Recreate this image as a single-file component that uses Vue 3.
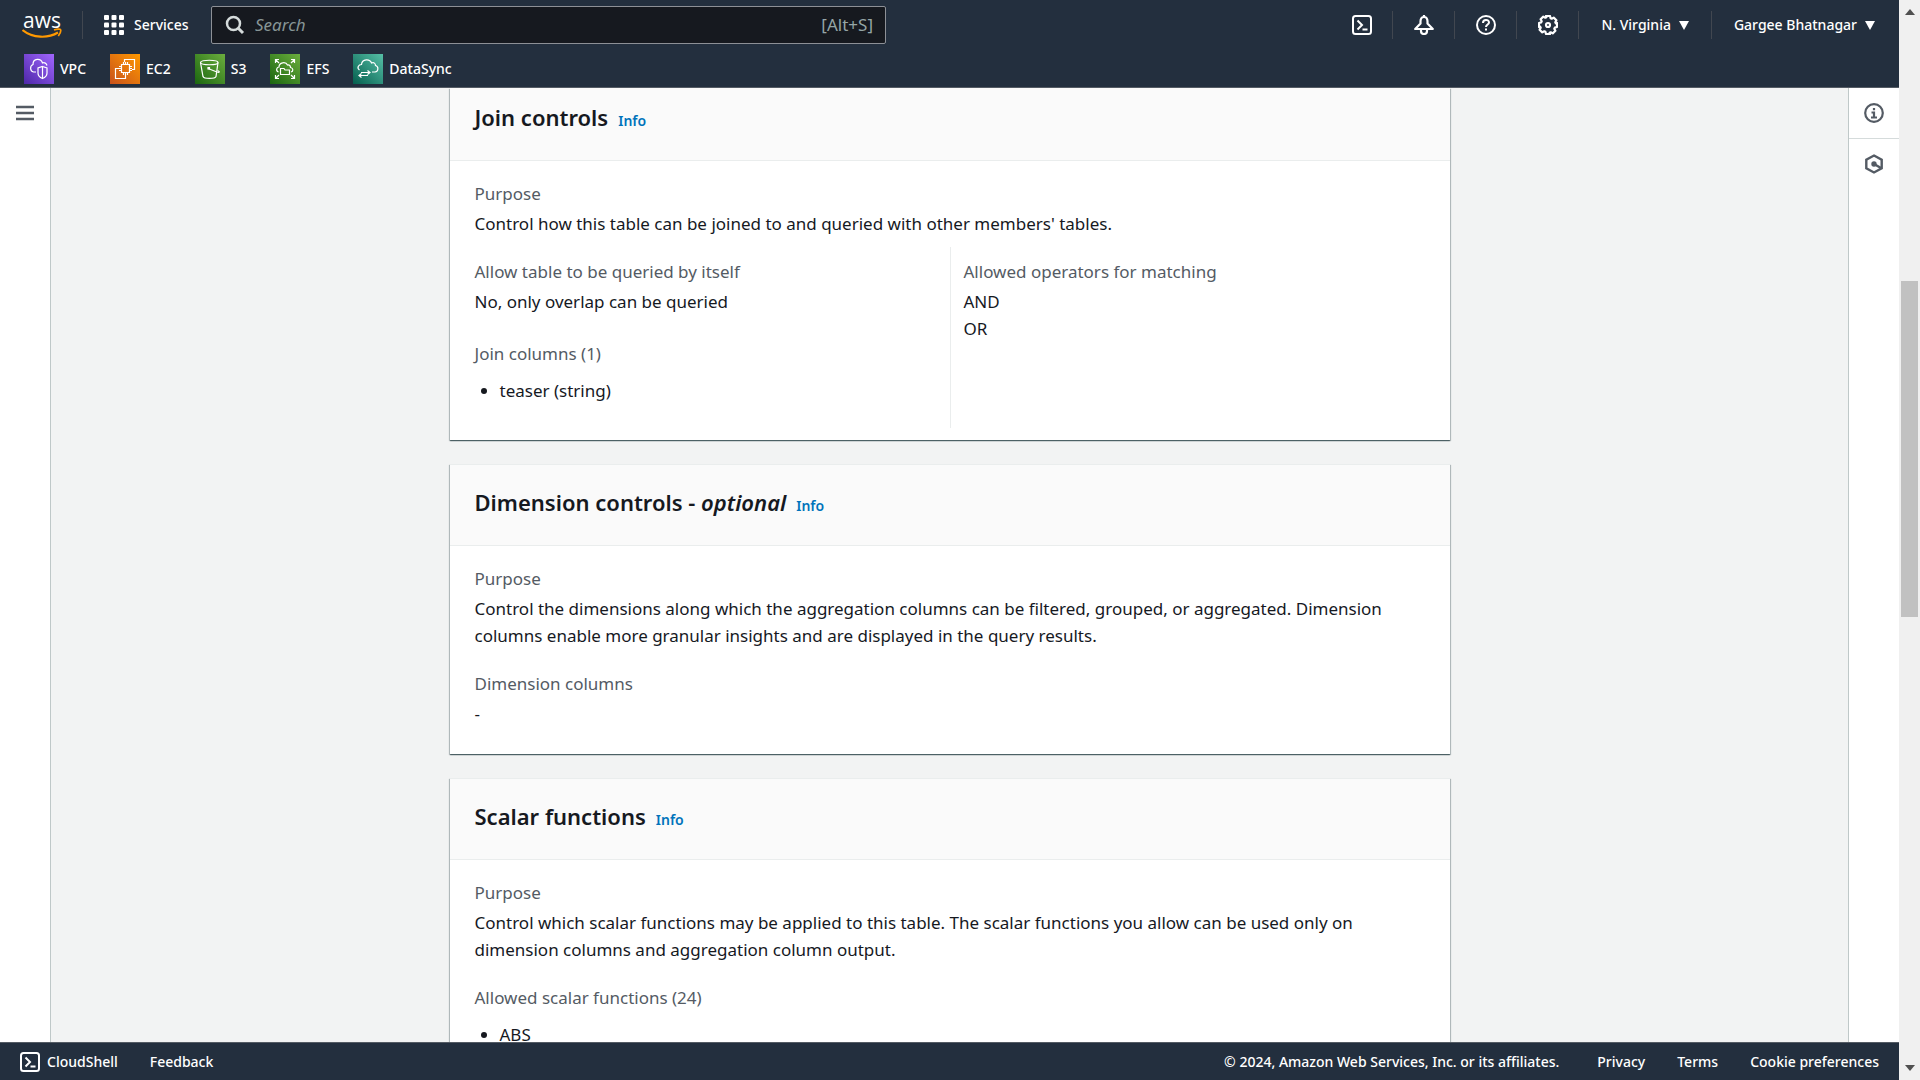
<template>
  <div class="app">
    <div class="page">
      <!-- Top navigation -->
      <header class="header">
        <div class="nav-row">
          <a class="logo" href="#" aria-label="AWS home">
            <span class="logo-text">aws</span>
            <svg class="logo-smile" viewBox="0 0 40 11" width="40" height="11" fill="none" stroke="#ff9900">
              <path d="M.5 2C11 10.500 26 10.500 36 4.500" stroke-width="2.200" />
              <path d="M32 2c3-1.200 6.300-1.200 6.600-.3.300 1-.5 4-2.300 6.300" stroke-width="1.700" />
            </svg>
          </a>
          <span class="separator logo-separator"></span>
          <button class="nav-button services" type="button">
            <svg viewBox="0 0 20 20" width="20" height="20" fill="#fff">
              <template v-for="row in 3" :key="row">
                <rect
                  v-for="col in 3"
                  :key="col"
                  :x="(col - 1) * 7.5"
                  :y="(row - 1) * 7.5"
                  width="5"
                  height="5"
                  rx="1"
                />
              </template>
            </svg>
            <span>Services</span>
          </button>
          <label class="search">
            <svg viewBox="0 0 20 20" width="20" height="20" fill="none" stroke="#d5dbdb" stroke-width="2.500">
              <circle cx="8.500" cy="8.500" r="6.500" />
              <path d="M13 13l5 5" stroke-width="3" />
            </svg>
            <input v-model="query" type="text" placeholder="Search" aria-label="Search" />
            <span class="shortcut">[Alt+S]</span>
          </label>

          <div class="tools">
            <button class="tool" type="button" aria-label="CloudShell">
              <svg viewBox="0 0 20 20" width="20" height="20" fill="none" stroke="#fff" stroke-width="2">
                <rect x="1" y="1" width="18" height="18" rx="2.500" />
                <path d="M5.500 5.500l4.500 4.500-4.500 4.500M10.500 14.500h5" />
              </svg>
            </button>
            <button class="tool" type="button" aria-label="Notifications">
              <svg viewBox="0 0 20 20" width="20" height="20" fill="none" stroke="#fff" stroke-width="2.200" stroke-linejoin="round">
                <path d="M10 0v2M10 2C7.500 2 6.500 4 6.500 6.500v2L1.200 14h17.600l-5.300-5.500v-2C13.500 4 12.500 2 10 2z" />
                <path d="M7 14.500v1.500a3 3 0 0 0 6 0v-1.500" />
              </svg>
            </button>
            <button class="tool" type="button" aria-label="Help">
              <svg viewBox="0 0 20 20" width="20" height="20" fill="none" stroke="#fff" stroke-width="2">
                <circle cx="10" cy="10" r="9" />
                <path d="M7 8c0-4 6-4 6-.5 0 2-3 2-3 4.500M10 13.500v2" />
              </svg>
            </button>
            <button class="tool" type="button" aria-label="Settings">
              <svg viewBox="0 0 20 20" width="20" height="20" fill="none" stroke="#fff" stroke-width="2.200" stroke-linejoin="round">
                <path
                  d="M8 1h4l.6 2.200 1.100.5 2-1.100 2.700 2.700-1.100 2 .5 1.100L19 8v4l-2.200.6-.5 1.100 1.100 2-2.700 2.700-2-1.100-1.100.5L12 19H8l-.6-2.200-1.100-.5-2 1.100-2.700-2.700 1.100-2-.5-1.100L1 12V8l2.200-.6.500-1.100-1.100-2 2.700-2.700 2 1.100 1.100-.5z"
                />
                <circle cx="10" cy="10" r="2" />
              </svg>
            </button>
            <button class="nav-button menu" type="button">
              <span>N. Virginia</span>
              <svg viewBox="0 0 10 9" width="10" height="9" fill="#fff"><path d="M0 0h10L5 9z" /></svg>
            </button>
            <button class="nav-button menu" type="button">
              <span>Gargee Bhatnagar</span>
              <svg viewBox="0 0 10 9" width="10" height="9" fill="#fff"><path d="M0 0h10L5 9z" /></svg>
            </button>
          </div>
        </div>

        <!-- Favourite services -->
        <nav class="favorites">
          <a v-for="item in favorites" :key="item.name" class="favorite" href="#">
            <svg class="favorite-icon" :class="item.theme" viewBox="0 0 30 30" width="30" height="30" fill="none" stroke="#fff" stroke-width="1.200">
              <path v-for="d in item.paths" :key="d" :d="d" />
            </svg>
            <span>{{ item.name }}</span>
          </a>
        </nav>
      </header>

      <div class="body">
        <aside class="side left">
          <button class="side-button" type="button" aria-label="Open navigation">
            <svg viewBox="0 0 18 16" width="18" height="16" stroke="#545b64" stroke-width="2.500">
              <path d="M0 2h18M0 8h18M0 14h18" />
            </svg>
          </button>
        </aside>

        <main class="content">
          <section class="card">
            <div class="card-header first">
              <h2>Join controls</h2>
              <a class="info" href="#">Info</a>
            </div>
            <div class="card-body">
              <div class="field">
                <div class="label">Purpose</div>
                <div>Control how this table can be joined to and queried with other members' tables.</div>
              </div>
              <div class="columns">
                <div class="column">
                  <div class="field">
                    <div class="label">Allow table to be queried by itself</div>
                    <div>No, only overlap can be queried</div>
                  </div>
                  <div class="field">
                    <div class="label">Join columns (1)</div>
                    <ul>
                      <li>teaser (string)</li>
                    </ul>
                  </div>
                </div>
                <div class="column">
                  <div class="field">
                    <div class="label">Allowed operators for matching</div>
                    <div v-for="operator in operators" :key="operator">{{ operator }}</div>
                  </div>
                </div>
              </div>
            </div>
          </section>

          <section class="card">
            <div class="card-header">
              <h2>Dimension controls - <em>optional</em></h2>
              <a class="info" href="#">Info</a>
            </div>
            <div class="card-body">
              <div class="field">
                <div class="label">Purpose</div>
                <div>
                  Control the dimensions along which the aggregation columns can be filtered, grouped, or aggregated. Dimension
                  columns enable more granular insights and are displayed in the query results.
                </div>
              </div>
              <div class="field">
                <div class="label">Dimension columns</div>
                <div>-</div>
              </div>
            </div>
          </section>

          <section class="card">
            <div class="card-header">
              <h2>Scalar functions</h2>
              <a class="info" href="#">Info</a>
            </div>
            <div class="card-body">
              <div class="field">
                <div class="label">Purpose</div>
                <div>
                  Control which scalar functions may be applied to this table. The scalar functions you allow can be used only on
                  dimension columns and aggregation column output.
                </div>
              </div>
              <div class="field">
                <div class="label">Allowed scalar functions (24)</div>
                <ul>
                  <li>ABS</li>
                </ul>
              </div>
            </div>
          </section>
        </main>

        <aside class="side right">
          <button class="side-button" type="button" aria-label="Info panel">
            <svg viewBox="0 0 20 20" width="20" height="20" fill="none" stroke="#545b64" stroke-width="2.200">
              <circle cx="10" cy="10" r="8.800" />
              <path d="M10 5v2.200M7.500 9.500H10v5M7 14.500h6" />
            </svg>
          </button>
          <button class="side-button" type="button" aria-label="Diagnostics">
            <svg viewBox="0 0 20 20" width="20" height="20" fill="none" stroke="#545b64" stroke-width="2.400">
              <path d="M10 1.500l7.700 4.300v8.400L10 18.500l-7.700-4.300V5.800z" />
              <path d="M10 10l7 4" />
              <circle cx="10" cy="10" r="1.500" fill="#545b64" />
            </svg>
          </button>
        </aside>
      </div>

      <!-- Bottom bar -->
      <footer class="footer">
        <button class="nav-button shell" type="button">
          <svg viewBox="0 0 20 20" width="20" height="20" fill="none" stroke="#fff" stroke-width="2">
            <rect x="1" y="1" width="18" height="18" rx="2.500" />
            <path d="M5.500 5.500l4.500 4.500-4.500 4.500M10.500 14.500h5" />
          </svg>
          <span>CloudShell</span>
        </button>
        <a href="#">Feedback</a>
        <span class="copyright">© 2024, Amazon Web Services, Inc. or its affiliates.</span>
        <a href="#">Privacy</a>
        <a href="#">Terms</a>
        <a href="#">Cookie preferences</a>
      </footer>
    </div>

    <!-- Page scrollbar -->
    <div class="scrollbar" aria-hidden="true">
      <svg viewBox="0 0 10 6" width="10" height="6" fill="#505050"><path d="M0 6h10L5 0z" /></svg>
      <div class="track">
        <div class="thumb"></div>
      </div>
      <svg viewBox="0 0 10 6" width="10" height="6" fill="#505050"><path d="M0 0h10L5 6z" /></svg>
    </div>
  </div>
</template>

<script setup>
import { ref } from 'vue'

const query = ref('')

const operators = ['AND', 'OR']

const favorites = [
  {
    name: 'VPC',
    theme: 'purple',
    paths: [
      'M12 18H9.500A4 4 0 0 1 9 10.500C9 4 17 4 18.500 9c2-1 4 .5 4.500 2.500',
      'M18.500 12.500l4.500 1.500v5c0 3-2 4.500-4.500 5.500-2.500-1-4.500-2.500-4.500-5.500v-5z',
      'M18.500 12.500v12'
    ]
  },
  {
    name: 'EC2',
    theme: 'orange',
    paths: [
      'M11.500 10.500h8v8h-8z',
      'M13.500 8v2.500M15.500 8v2.500M17.500 8v2.500M13.500 18.500V21M15.500 18.500V21M17.500 18.500V21M9 12.500h2.500M9 14.500h2.500M9 16.500h2.500M19.500 12.500H22M19.500 14.500H22M19.500 16.500H22',
      'M14.500 8V5.500h10v10H22',
      'M9 14.500H5.500v10h10V21'
    ]
  },
  {
    name: 'S3',
    theme: 'green',
    paths: [
      'M5.500 8.500C5.500 5.500 23 5.500 23 8.500S5.500 11.500 5.500 8.500z',
      'M5.500 8.500l2.500 14c1 2.500 12 2.500 13 0l2-14',
      'M13 14.500l9 3.500c3 1 3-.5.500-1.500',
      'M13 13.500h1.500V15H13z'
    ]
  },
  {
    name: 'EFS',
    theme: 'green',
    paths: [
      'M5.500 9V5.500H9M5.500 5.500L9 9M21 5.500h3.500V9M24.500 5.500L21 9M5.500 21v3.500H9M5.500 24.500L9 21M24.500 21v3.500H21M24.500 24.500L21 21',
      'M8.500 18c-3-1-2-5 .500-5 0-5 7-5.500 8.500-2 2-.5 3 1 3 2.500 3 .5 3 4 .5 4.500',
      'M10.500 20.500v-6H14l1 1.500h4.500v4.500z'
    ]
  },
  {
    name: 'DataSync',
    theme: 'teal',
    paths: [
      'M6.500 16c-3-2-1-5.500 2-5.500C9 4.500 17 4.500 18.500 9c2.500-1 4 .5 4 2.500 3.500 1 3 6-.5 6.500h-3',
      'M8 18.500h9M14.500 16.500l2.500 2-2.500 2M15 21.500H6M8.500 19.500L6 21.500l2.500 2'
    ]
  }
]
</script>

<style>
body {
  margin: 0;
  overflow: hidden;
}
</style>

<style scoped>
.app {
  display: flex;
  height: 100vh;
  font-family: 'Noto Sans', 'Open Sans', sans-serif;
  font-size: 17px;
  line-height: 27px;
  color: #16191f;
}

.page {
  flex: 1;
  min-width: 0;
  display: flex;
  flex-direction: column;
}

button {
  padding: 0;
  border: 0;
  background: none;
  font: inherit;
  color: inherit;
  cursor: pointer;
}

a {
  color: inherit;
  text-decoration: none;
}

svg {
  flex: none;
  display: block;
}

/* Header */
.header {
  box-sizing: border-box;
  height: 88px;
  background: #232f3e;
  border-bottom: 1px solid #545b64;
  color: #fff;
  font-size: 14px;
  font-weight: 500;
  line-height: 28px;
}

.nav-row {
  display: flex;
  align-items: center;
  height: 50px;
  padding-left: 22px;
}

.logo {
  display: flex;
  flex-direction: column;
  align-items: center;
  width: 40px;
}

.logo-text {
  font-family: 'Open Sans', sans-serif;
  font-size: 21px;
  font-weight: 500;
  line-height: 16px;
}

.separator {
  width: 1px;
  height: 28px;
  background: #414750;
}

.logo-separator {
  margin: 0 21px 0 20px;
}

.nav-button {
  display: flex;
  align-items: center;
  gap: 8px;
  white-space: nowrap;
}

.services {
  gap: 10px;
  width: 107px;
}

.search {
  box-sizing: border-box;
  display: flex;
  align-items: center;
  gap: 10px;
  flex: 0 1 675px;
  height: 38px;
  padding: 0 12px 0 13px;
  background: #16191f;
  border: 1px solid #8d9096;
  border-radius: 2px;
  font-size: 17px;
  font-weight: 400;
  color: #95a5a6;
}

.search input {
  flex: 1;
  min-width: 0;
  height: 28px;
  padding: 0;
  border: 0;
  outline: 0;
  background: none;
  font: inherit;
  color: #fff;
}

.search input::placeholder {
  color: #879596;
  font-style: italic;
  opacity: 1;
}

.tools {
  display: flex;
  align-items: center;
  margin-left: auto;
  padding-right: 2px;
}

.tool,
.menu {
  height: 28px;
  border-right: 1px solid #414750;
}

.tool {
  display: flex;
  align-items: center;
  justify-content: center;
  width: 62px;
}

.menu {
  padding: 0 22px;
}

.menu:last-child {
  border-right: 0;
}

/* Favourites */
.favorites {
  display: flex;
  gap: 24px;
  padding: 4px 24px 0;
}

.favorite {
  display: flex;
  align-items: center;
  gap: 6px;
}

.purple {
  background: linear-gradient(45deg, #4d27a8, #a166ff);
}

.orange {
  background: linear-gradient(45deg, #c8511b, #ff9900);
}

.green {
  background: linear-gradient(45deg, #1b660f, #6cae3e);
}

.teal {
  background: linear-gradient(45deg, #055f4e, #56c0a7);
}

/* Body */
.body {
  flex: 1;
  min-height: 0;
  display: flex;
  background: #f2f3f3;
}

.side {
  width: 50px;
  background: #fff;
}

.left {
  border-right: 1px solid #bfc8c8;
}

.right {
  border-left: 1px solid #bfc8c8;
}

.side-button {
  display: flex;
  align-items: center;
  justify-content: center;
  width: 100%;
  height: 50px;
}

.right .side-button:first-child {
  height: 51px;
  border-bottom: 1px solid #d5dbdb;
}

.content {
  flex: 1;
  min-width: 0;
  display: flex;
  flex-direction: column;
  align-items: center;
  gap: 24px;
  overflow: hidden;
}

/* Cards */
.card {
  flex: none;
  width: 100%;
  max-width: 1000px;
  background: #fff;
  border-top: 1px solid #eaeded;
  box-shadow: 0 1px 1px 0 rgba(0, 28, 36, 0.5), 1px 1px 1px 0 rgba(0, 28, 36, 0.2), -1px 1px 1px 0 rgba(0, 28, 36, 0.2);
}

.card:first-child {
  border-top: 0;
}

.card-header {
  box-sizing: border-box;
  display: flex;
  align-items: baseline;
  gap: 10px;
  height: 81px;
  padding: 23px 25px 0;
  background: #fafafa;
  border-bottom: 1px solid #eaeded;
}

.card-header.first {
  height: 73px;
  padding-top: 15px;
}

h2 {
  margin: 0;
  font-size: 22px;
  font-weight: 600;
  line-height: 28px;
}

.info {
  font-size: 14px;
  font-weight: 600;
  color: #0073bb;
}

.card-body {
  display: flex;
  flex-direction: column;
  gap: 21px;
  padding: 19px 25px 27px;
}

.label {
  margin-bottom: 3px;
  color: #545b64;
}

.columns {
  display: grid;
  grid-template-columns: 1fr 1fr;
  margin: -11px 0 -15px;
}

.column {
  display: flex;
  flex-direction: column;
  gap: 25px;
  padding: 11px 0 24px;
}

.column + .column {
  padding-left: 13px;
  border-left: 1px solid #eaeded;
}

ul {
  margin: 0;
  padding: 7px 0 0 25px;
}

/* Footer */
.footer {
  box-sizing: border-box;
  display: flex;
  align-items: center;
  gap: 32px;
  height: 38px;
  padding: 0 20px;
  background: #232f3e;
  border-top: 1px solid #545b64;
  color: #fff;
  font-size: 14px;
  font-weight: 500;
}

.shell {
  gap: 7px;
}

.copyright {
  margin-left: auto;
  margin-right: 6px;
}

/* Scrollbar */
.scrollbar {
  box-sizing: border-box;
  display: flex;
  flex-direction: column;
  align-items: center;
  width: 21px;
  padding: 9px 2px;
  background: #f0f0f0;
}

.track {
  flex: 1;
  width: 100%;
  padding: 266px 0 0;
}

.thumb {
  height: 336px;
  background: #c1c1c1;
}
</style>
